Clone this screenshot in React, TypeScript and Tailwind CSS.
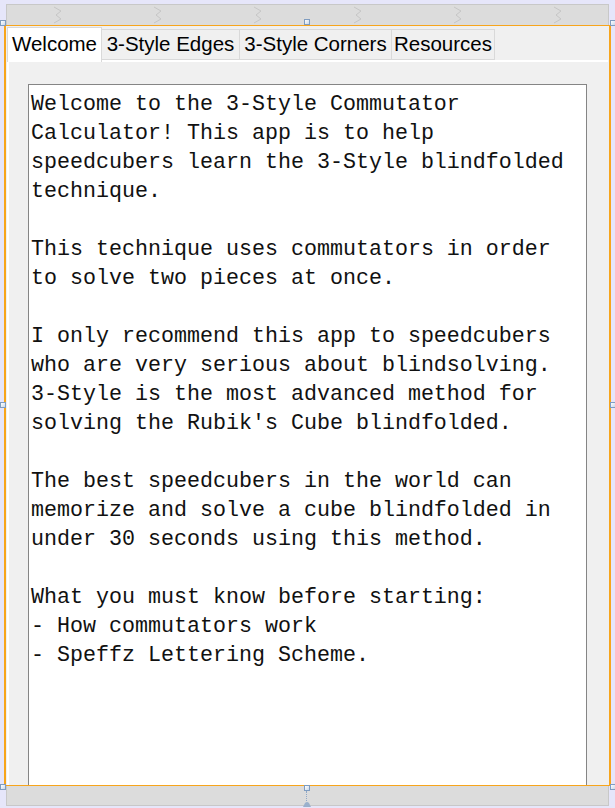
import React from "react";

const TABS = [
  { label: "Welcome", width: "w-[95px]" },
  { label: "3-Style Edges", width: "w-[139px]" },
  { label: "3-Style Corners", width: "w-[153px]" },
  { label: "Resources", width: "w-[104px]" },
];

const LINES = [
  "Welcome to the 3-Style Commutator",
  "Calculator! This app is to help",
  "speedcubers learn the 3-Style blindfolded",
  "technique.",
  "",
  "This technique uses commutators in order",
  "to solve two pieces at once.",
  "",
  "I only recommend this app to speedcubers",
  "who are very serious about blindsolving.",
  "3-Style is the most advanced method for",
  "solving the Rubik's Cube blindfolded.",
  "",
  "The best speedcubers in the world can",
  "memorize and solve a cube blindfolded in",
  "under 30 seconds using this method.",
  "",
  "What you must know before starting:",
  "- How commutators work",
  "- Speffz Lettering Scheme.",
];

// Designer grip marks on the top strip
function Grip() {
  return (
    <svg width="9" height="18" viewBox="0 0 9 18" className="shrink-0">
      <polyline
        points="1,1 8,5 3,9 8,13 1,17"
        fill="none"
        stroke="#c6c6c6"
        strokeWidth="1"
      />
    </svg>
  );
}

function Handle({ className }: { className: string }) {
  return (
    <div
      className={`absolute h-[6px] w-[6px] border border-[#7f9cc0] bg-gradient-to-br from-white to-[#c9d8ea] ${className}`}
    />
  );
}

export default function App() {
  return (
    <div className="relative h-[808px] w-[615px] overflow-hidden bg-[#e6e6fa] pt-[4px] font-['Liberation_Sans',Arial,sans-serif]">
      {/* Top strip */}
      <div className="ml-[6px] flex h-[21px] w-[603px] items-center gap-[91px] border-l border-r border-t border-[#c8c8c8] bg-[#dcdcdc] pl-[46px]">
        {[0, 1, 2, 3, 4, 5].map((i) => (
          <Grip key={i} />
        ))}
      </div>

      {/* Selected form frame */}
      <div className="ml-[4px] h-[761px] w-[607px] overflow-hidden border-x-2 border-y border-[#f7a51c] bg-[#f0f0f0]">
        {/* Tab headers */}
        <div className="relative z-10 flex items-end pl-[1px] pt-[1px]">
          {TABS.map((tab, i) =>
            i === 0 ? (
              <div
                key={tab.label}
                className={`${tab.width} -mb-[2px] flex h-[35px] items-center justify-center border border-b-0 border-[#d9d9d9] bg-white pb-[2px] text-[20.5px] text-black`}
              >
                {tab.label}
              </div>
            ) : (
              <div
                key={tab.label}
                className={`${tab.width} -ml-px flex h-[31px] items-center justify-center border border-[#d9d9d9] bg-[#f0f0f0] text-[20.5px] leading-none text-black`}
              >
                {tab.label}
              </div>
            )
          )}
        </div>

        {/* Tab page */}
        <div className="ml-[1px] h-[740px] w-[601px] border-l-2 border-t-2 border-white bg-[#f0f0f0] pl-[19px] pt-[22px]">
          <div className="h-[720px] w-[559px] border border-[#858585] bg-white pl-[2px] pt-[5px] font-['Liberation_Mono','Courier_New',monospace] text-[21.67px] leading-[29px] text-[#111]">
            {LINES.map((line, i) => (
              <div key={i} className="h-[29px] whitespace-pre">
                {line}
              </div>
            ))}
          </div>
        </div>
      </div>

      {/* Bottom strip */}
      <div className="ml-[6px] h-[20px] w-[603px] border-b border-l border-r border-[#c8c8c8] bg-[#dcdcdc]" />

      {/* Selection handles */}
      <Handle className="left-0 top-[20px]" />
      <Handle className="left-[304px] top-[19px]" />
      <Handle className="left-[610px] top-[20px]" />
      <Handle className="left-0 top-[402px]" />
      <Handle className="left-[610px] top-[402px]" />
      <Handle className="left-0 top-[784px]" />
      <Handle className="left-[304px] top-[785px]" />
      <Handle className="left-[610px] top-[784px]" />
      <div className="absolute left-[306px] top-[791px] h-[10px] border-l border-dotted border-[#8fa8c8]" />
      <svg
        width="10"
        height="6"
        viewBox="0 0 10 6"
        className="absolute left-[302px] top-[801px]"
      >
        <path d="M1 6 L3 2 Q5 0 7 2 L9 6 Z" fill="#9ab0cc" />
      </svg>
    </div>
  );
}
